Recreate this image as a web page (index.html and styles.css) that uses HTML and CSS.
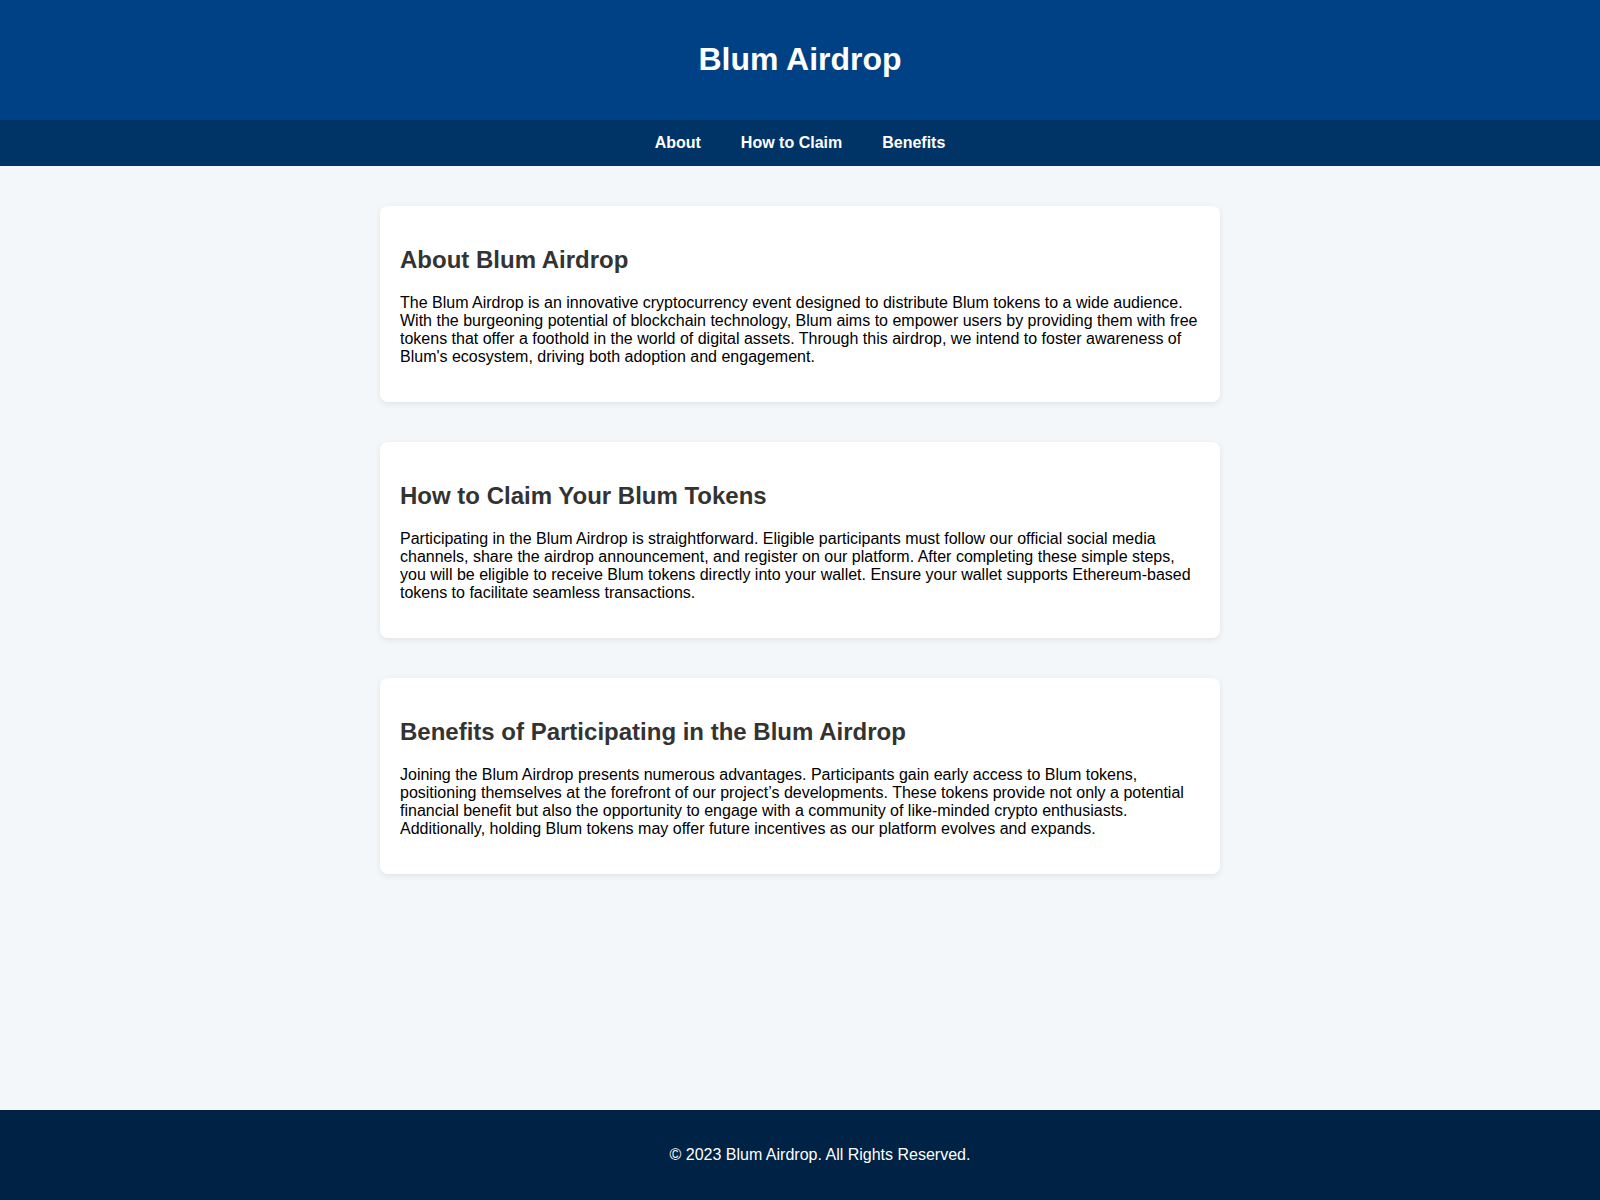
FILE: index.html
```html
<!DOCTYPE html>
<html lang="en">
<head>
<meta charset="utf-8">
<title>Blum Airdrop</title>
<link rel="stylesheet" href="styles.css">
</head>
<body>
<header class="site-header">
  <h1 class="site-title">Blum Airdrop</h1>
</header>
<nav class="site-nav">
  <a href="#about">About</a>
  <a href="#claim">How to Claim</a>
  <a href="#benefits">Benefits</a>
</nav>
<main class="content">
  <section class="card" id="about">
    <h2>About Blum Airdrop</h2>
    <p>The Blum Airdrop is an innovative cryptocurrency event designed to distribute Blum tokens to a wide audience. With the burgeoning potential of blockchain technology, Blum aims to empower users by providing them with free tokens that offer a foothold in the world of digital assets. Through this airdrop, we intend to foster awareness of Blum's ecosystem, driving both adoption and engagement.</p>
  </section>
  <section class="card" id="claim">
    <h2>How to Claim Your Blum Tokens</h2>
    <p>Participating in the Blum Airdrop is straightforward. Eligible participants must follow our official social media channels, share the airdrop announcement, and register on our platform. After completing these simple steps, you will be eligible to receive Blum tokens directly into your wallet. Ensure your wallet supports Ethereum-based tokens to facilitate seamless transactions.</p>
  </section>
  <section class="card" id="benefits">
    <h2>Benefits of Participating in the Blum Airdrop</h2>
    <p>Joining the Blum Airdrop presents numerous advantages. Participants gain early access to Blum tokens, positioning themselves at the forefront of our project’s developments. These tokens provide not only a potential financial benefit but also the opportunity to engage with a community of like-minded crypto enthusiasts. Additionally, holding Blum tokens may offer future incentives as our platform evolves and expands.</p>
  </section>
</main>
<footer class="site-footer">
  <p>© 2023 Blum Airdrop. All Rights Reserved.</p>
</footer>
</body>
</html>
```

FILE: styles.css
```css
html, body {
  margin: 0;
  padding: 0;
}
body {
  font-family: "Liberation Sans", Arial, sans-serif;
  font-size: 16px;
  color: #000;
  background: #f4f7f9;
  min-height: 100vh;
  display: flex;
  flex-direction: column;
}
.site-header {
  background: #004085;
  color: #fff;
  text-align: center;
  padding: 20px 0;
}
.site-title {
  margin: 21.44px 0;
  font-size: 32px;
  font-weight: bold;
}
.site-nav {
  background: #003366;
  display: flex;
  justify-content: center;
  padding: 14px 0;
}
.site-nav a {
  color: #fff;
  font-weight: bold;
  text-decoration: none;
  margin: 0 20px;
}
.content {
  flex: 1;
  display: flex;
  flex-direction: column;
  align-items: center;
  gap: 40px;
  padding: 40px 0 40px;
}
.card {
  box-sizing: border-box;
  width: 840px;
  background: #fff;
  border-radius: 8px;
  padding: 20px;
  box-shadow: 0 2px 6px rgba(0, 0, 0, 0.08);
}
.card h2 {
  margin: 20px 0;
  font-size: 24px;
  color: #333;
}
.card p {
  margin: 16px 0;
}
.site-footer {
  background: #002244;
  color: #fff;
  text-align: center;
  padding: 20px 0 20px 40px;
}
.site-footer p {
  margin: 16px 0;
}
```
